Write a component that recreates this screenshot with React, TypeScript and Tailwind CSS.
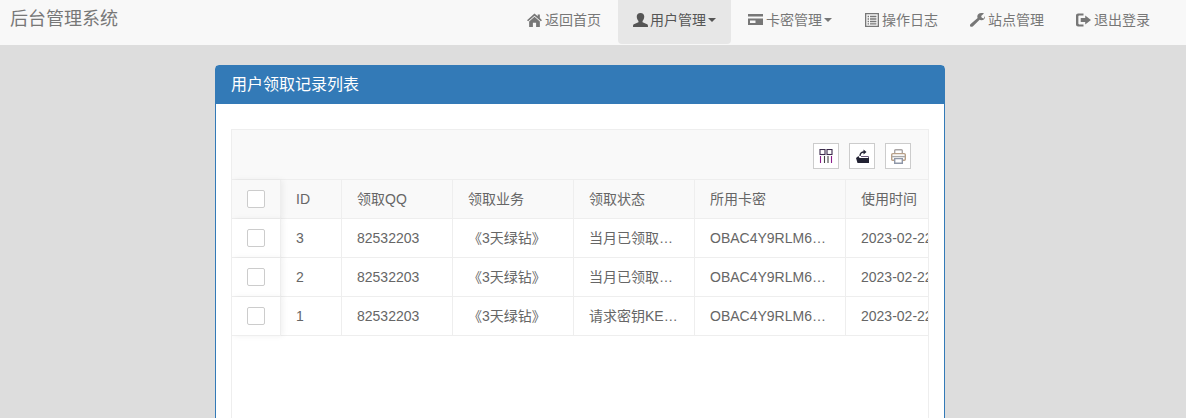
import type { ReactNode } from "react"

const rows = [
    { id: 3, status: "当月已领取过了" },
    { id: 2, status: "当月已领取过了" },
    { id: 1, status: "请求密钥KEY失败" },
]

function HomeIcon() {
    return (
        <svg width="15" height="14" viewBox="0 0 14 14" fill="currentColor" preserveAspectRatio="none">
            <path d="M7 .4 L10 3.2 L10 1.6 L12 1.6 L12 5 L14 7.2 L12.9 8.3 L7 2.8 L1.1 8.3 L0 7.2 Z" />
            <path d="M7 3.8 L12 8.4 L12 14 L8.5 14 L8.5 9.8 L5.5 9.8 L5.5 14 L2 14 L2 8.4 Z" />
        </svg>
    )
}

function UserIcon() {
    return (
        <svg width="15" height="14" viewBox="0 0 14 14" fill="currentColor" preserveAspectRatio="none">
            <path d="M7 0 C9.3 0 10.5 1.5 10.5 3.6 C10.5 5.6 9.6 7.3 8.9 8 L8.9 9.2 L13.2 11.2 C13.8 11.5 14 12 14 14 L0 14 C0 12 .2 11.5 .8 11.2 L5.1 9.2 L5.1 8 C4.4 7.3 3.5 5.6 3.5 3.6 C3.5 1.5 4.7 0 7 0 Z" />
        </svg>
    )
}

function CardIcon() {
    return (
        <svg width="15" height="14" viewBox="0 0 15 14" fill="currentColor">
            <path fillRule="evenodd" d="M0 1 L15 1 L15 12 L0 12 Z M0 3.4 L0 5.6 L15 5.6 L15 3.4 Z M2 7.6 L2 10 L7.5 10 L7.5 7.6 Z" />
        </svg>
    )
}

function ListIcon() {
    return (
        <svg width="14" height="14" viewBox="0 0 14 14" fill="currentColor">
            <path fillRule="evenodd" d="M0 0 L14 0 L14 14 L0 14 Z M1.3 1.3 L1.3 12.7 L12.7 12.7 L12.7 1.3 Z" />
            <path d="M2.6 2.8 H4 V4.2 H2.6 Z M5 2.8 H11.4 V4.2 H5 Z M2.6 5.3 H4 V6.7 H2.6 Z M5 5.3 H11.4 V6.7 H5 Z M2.6 7.8 H4 V9.2 H2.6 Z M5 7.8 H11.4 V9.2 H5 Z M2.6 10.2 H4 V11.5 H2.6 Z M5 10.2 H11.4 V11.5 H5 Z" />
        </svg>
    )
}

function WrenchIcon() {
    return (
        <svg width="15" height="14" viewBox="0 0 14 14" fill="currentColor" preserveAspectRatio="none">
            <path d="M10.4 0 C12 -.1 13 .4 13 .4 L10.4 3 L11 4.8 L12.8 5.4 L14 3 C14.4 5.2 13 7.4 10.4 7.2 C9.8 7.2 9.4 7 9 6.8 L2.8 13.2 C2 14 1 14 .4 13.4 C-.2 12.8 -.2 11.8 .6 11 L7.1 5 C6.9 4.5 6.8 4 6.8 3.5 C6.9 1.5 8.4 .1 10.4 0 Z" />
        </svg>
    )
}

function LogoutIcon() {
    return (
        <svg width="15" height="14" viewBox="0 0 14 14" fill="currentColor" preserveAspectRatio="none">
            <path d="M2 .5 L7 .5 L7 2.6 L3 2.6 C2.5 2.6 2.2 2.9 2.2 3.4 L2.2 10.6 C2.2 11.1 2.5 11.4 3 11.4 L7 11.4 L7 13.5 L2 13.5 C.9 13.5 0 12.6 0 11.5 L0 2.5 C0 1.4 .9 .5 2 .5 Z" />
            <path d="M8.6 2.6 L14 7 L8.6 11.4 L8.6 8.9 L4.4 8.9 L4.4 5.1 L8.6 5.1 Z" />
        </svg>
    )
}

function ColumnsIcon() {
    return (
        <svg width="14" height="14" viewBox="0 0 14 14" fill="none" strokeWidth="1.1">
            <rect x="1" y=".5" width="5" height="5" stroke="#3a2a4a" />
            <rect x="8" y=".5" width="5" height="5" stroke="#3a2a4a" />
            <path d="M1.5 7 V14" stroke="#8a1f8a" />
            <path d="M5.5 7 V14" stroke="#444" />
            <path d="M9 7 V14" stroke="#444" />
            <path d="M12.5 7 V14" stroke="#8a1f8a" />
        </svg>
    )
}

function ExportIcon() {
    return (
        <svg width="13" height="14" viewBox="0 0 13 14" fill="none">
            <path d="M0 9 L2.5 7 L3.5 9 L13 9 L13 14 L1.5 14 Z" fill="#222233" />
            <path d="M4 7 C4 4 5.5 3 8 3" stroke="#222233" strokeWidth="1.3" />
            <path d="M7.5 .5 L10.5 3 L7.5 5.5 Z" fill="#222233" />
            <path d="M5 7.5 H12.5 V9" stroke="#6a5a7a" strokeWidth="1" />
        </svg>
    )
}

function PrintIcon() {
    return (
        <svg width="15" height="15" viewBox="0 0 15 15" fill="none" strokeWidth="1.4">
            <path d="M3.7 4.5 V1.7 C3.7 1.1 4 .7 4.7 .7 H10.3 C11 .7 11.3 1.1 11.3 1.7 V4.5" stroke="#a9a5a5" />
            <path d="M3 11.3 H1.7 C1 11.3 .7 11 .7 10.3 V5.8 C.7 5 1.1 4.6 1.9 4.6 H13.1 C13.9 4.6 14.3 5 14.3 5.8 V10.3 C14.3 11 14 11.3 13.3 11.3 H12" stroke="#b8a088" />
            <path d="M1 7.6 H14" stroke="#a8a8a8" />
            <path d="M3.7 9.6 H11.3 V14.3 H3.7 Z" stroke="#8f97a8" />
        </svg>
    )
}

function NavItem(props: { icon: ReactNode, label: string, caret?: boolean, active?: boolean }) {
    return (
        <div className={`flex h-[44px] items-center px-[15px] pb-[5px] rounded-b-[4px] ${props.active ? "bg-[#e7e7e7] text-[#555]" : "text-[#777]"}`}>
            <span className={`flex w-[15px] justify-center ${props.active ? "mr-[2px]" : "mr-[3px]"}`}>{props.icon}</span>
            <span>{props.label}</span>
            {props.caret && <span className="ml-[2px] mt-[1px] h-0 w-0 border-x-4 border-t-4 border-x-transparent border-t-current"></span>}
        </div>
    )
}

function ToolButton(props: { children: ReactNode }) {
    return (
        <div className="flex h-[26px] w-[26px] items-center justify-center border border-[#ccc] bg-white">
            {props.children}
        </div>
    )
}

function Checkbox() {
    return <div className="mx-auto h-[18px] w-[18px] rounded-[2px] border border-[#ccc] bg-white"></div>
}

export default function App() {
    const headers = ["ID", "领取QQ", "领取业务", "领取状态", "所用卡密", "使用时间"]
    const tdClass = "h-[39px] border-b border-r border-[#eee] px-[15px] max-w-0 truncate"
    const lastClass = "h-[39px] border-b border-[#eee] px-[15px] whitespace-nowrap overflow-hidden"
    const stickyClass = "relative z-10 h-[39px] border-b border-r border-[#eee] shadow-[2px_0_6px_rgba(0,0,0,0.06)]"

    return (
        <div className="h-screen overflow-hidden bg-[#ddd] text-[14px] text-[#333] font-['Liberation_Sans','Noto_Sans_CJK_SC',sans-serif]">
            <nav className="flex h-[45px] items-start justify-between bg-[#f8f8f8] pr-[21px]">
                <div className="pl-[10px] pt-[7px] text-[18px] leading-[25px] text-[#777]">后台管理系统</div>
                <div className="flex gap-[2px] leading-[20px]">
                    <NavItem icon={<HomeIcon />} label="返回首页" />
                    <NavItem icon={<UserIcon />} label="用户管理" caret active />
                    <NavItem icon={<CardIcon />} label="卡密管理" caret />
                    <NavItem icon={<ListIcon />} label="操作日志" />
                    <NavItem icon={<WrenchIcon />} label="站点管理" />
                    <NavItem icon={<LogoutIcon />} label="退出登录" />
                </div>
            </nav>

            <div className="ml-[215px] mt-[20px] w-[730px] rounded-t-[4px] border border-[#337ab7] bg-white">
                <div className="flex h-[38px] items-center bg-[#337ab7] px-[15px] text-[16px] text-white">用户领取记录列表</div>
                <div className="px-[15px] pt-[25px]">
                    <div className="h-[400px] overflow-hidden border border-[#eee]">
                        <div className="flex h-[49px] items-start justify-end gap-[10px] bg-[#f9f9f9] pr-[17px] pt-[13px]">
                            <ToolButton><ColumnsIcon /></ToolButton>
                            <ToolButton><ExportIcon /></ToolButton>
                            <ToolButton><PrintIcon /></ToolButton>
                        </div>
                        <table className="w-[814px] table-fixed border-separate border-spacing-0 border-t border-[#eee] text-[14px] text-[#666]">
                            <colgroup>
                                <col className="w-[49px]" />
                                <col className="w-[61px]" />
                                <col className="w-[111px]" />
                                <col className="w-[121px]" />
                                <col className="w-[121px]" />
                                <col className="w-[151px]" />
                                <col className="w-[200px]" />
                            </colgroup>
                            <thead>
                                <tr className="bg-[#f9f9f9]">
                                    <th className={`${stickyClass} bg-[#f9f9f9]`}><Checkbox /></th>
                                    {headers.map((h, i) => (
                                        <th key={h} className={`${i === 5 ? lastClass : tdClass} text-left font-normal`}>{h}</th>
                                    ))}
                                </tr>
                            </thead>
                            <tbody>
                                {rows.map(row => (
                                    <tr key={row.id}>
                                        <td className={`${stickyClass} bg-white`}><Checkbox /></td>
                                        <td className={tdClass}>{row.id}</td>
                                        <td className={tdClass}>82532203</td>
                                        <td className={tdClass}>《3天绿钻》</td>
                                        <td className={tdClass}>{row.status}</td>
                                        <td className={tdClass}>OBAC4Y9RLM6X8Z2Q</td>
                                        <td className={lastClass}>2023-02-22 12:30:45</td>
                                    </tr>
                                ))}
                            </tbody>
                        </table>
                    </div>
                </div>
            </div>
        </div>
    )
}
